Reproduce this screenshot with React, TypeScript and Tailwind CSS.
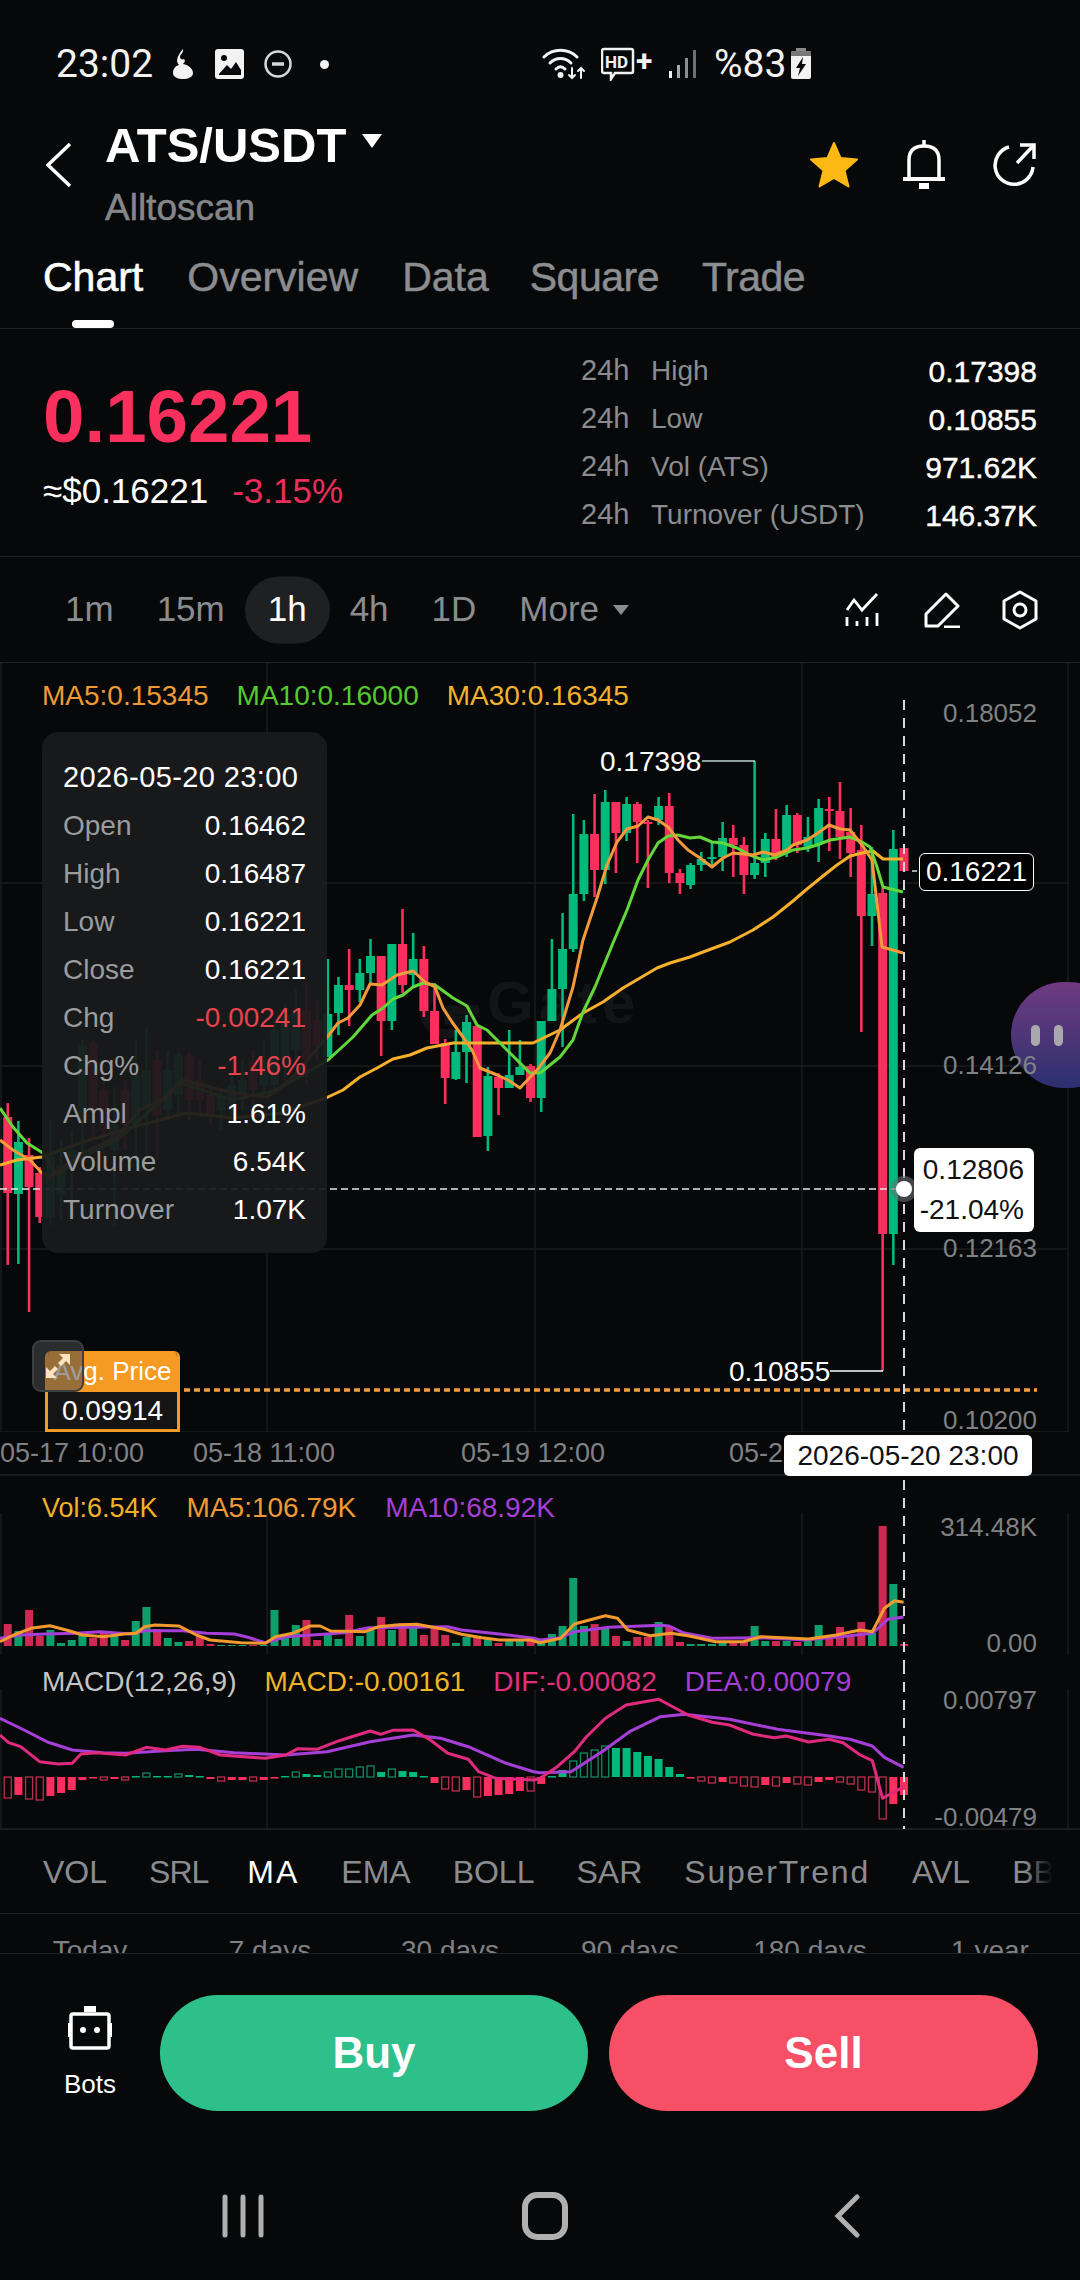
import { ReactNode } from 'react';

const UP = '#00b97a';
const DOWN = '#f92f5d';
const GRID = '#1a1c1e';
const LAST_X = 904;
const STEP = 10.67;

// [high, bodyTop, bodyBottom, low, up?] in page pixels, oldest first
const candles: [number, number, number, number, number][] = [
  [1103, 1117, 1193, 1265, 0], [1121, 1142, 1194, 1264, 1], [1138, 1155, 1187, 1312, 0], [1167, 1173, 1217, 1223, 0],
  [1120, 1157, 1217, 1225, 1], [1140, 1165, 1195, 1220, 1], [1130, 1150, 1168, 1200, 1], [1040, 1045, 1120, 1155, 1],
  [1040, 1043, 1110, 1140, 0], [1075, 1090, 1130, 1170, 0], [1087, 1125, 1150, 1226, 1], [1080, 1090, 1125, 1150, 0],
  [1040, 1075, 1125, 1160, 1], [1027, 1070, 1110, 1160, 1], [1050, 1060, 1115, 1160, 0], [1050, 1070, 1110, 1120, 1],
  [1052, 1055, 1095, 1115, 1], [1052, 1055, 1100, 1120, 0], [1060, 1080, 1100, 1115, 0], [1085, 1095, 1115, 1125, 0],
  [1090, 1095, 1110, 1130, 1], [1075, 1085, 1105, 1115, 1], [1060, 1080, 1095, 1110, 1], [1050, 1060, 1090, 1105, 0],
  [1040, 1060, 1085, 1095, 1], [1020, 1030, 1085, 1095, 1], [1005, 1015, 1060, 1080, 1], [990, 1010, 1050, 1065, 1],
  [983, 1010, 1060, 1085, 0], [1000, 1020, 1045, 1060, 0],
  [959, 1014, 1057, 1057, 1], [977, 985, 1013, 1035, 1], [949, 985, 990, 1026, 0], [959, 973, 990, 1002, 1],
  [939, 956, 973, 983, 1], [956, 956, 1021, 1056, 0], [944, 944, 1021, 1030, 1], [909, 944, 985, 993, 0],
  [933, 959, 975, 987, 1], [946, 959, 1011, 1017, 0], [983, 1011, 1044, 1044, 0], [1039, 1043, 1078, 1104, 0],
  [1030, 1052, 1079, 1080, 1], [1015, 1022, 1052, 1083, 1], [1026, 1026, 1137, 1137, 0], [1067, 1076, 1136, 1151, 1],
  [1073, 1077, 1088, 1115, 0], [1030, 1075, 1088, 1088, 1], [1040, 1067, 1075, 1075, 1], [1064, 1066, 1098, 1102, 0],
  [1021, 1021, 1098, 1112, 1], [939, 989, 1021, 1021, 1], [913, 949, 989, 1047, 1], [814, 894, 949, 952, 1],
  [820, 834, 894, 901, 1], [794, 834, 870, 897, 0], [790, 802, 870, 884, 1], [802, 802, 833, 873, 0],
  [797, 804, 833, 841, 1], [802, 804, 822, 863, 0], [820, 822, 823, 888, 0], [797, 806, 820, 825, 1],
  [793, 806, 873, 883, 0], [869, 873, 883, 894, 0], [863, 865, 885, 889, 1], [852, 859, 865, 871, 1],
  [843, 857, 859, 865, 1], [822, 838, 857, 871, 1], [825, 838, 845, 877, 0], [837, 845, 875, 894, 0],
  [761, 863, 875, 879, 1], [833, 839, 863, 877, 1], [809, 839, 857, 860, 0], [805, 815, 853, 857, 1],
  [813, 815, 845, 853, 0], [817, 837, 847, 852, 1], [799, 808, 844, 862, 1], [797, 809, 811, 851, 0],
  [782, 811, 837, 859, 0], [808, 832, 853, 877, 0], [825, 850, 916, 1032, 0], [847, 894, 916, 946, 1],
  [888, 893, 1234, 1371, 0], [830, 849, 1234, 1265, 1], [848, 848, 871, 871, 0],
];

// bar height in px, negative means an up bar
const volumes = [
  22, -15, 36, 10, -16, -3, -6, -13, 8, 13, -10, 6, -25, -39, 17, -8, -4, 5, 9, 2, -1, -1, -1, 1, -1, -36, -8, -21, 26, 6, -13, -7, 31, -10, -16,
  29, -16, 23, -21, 11, 18, 11, -3, -9, 8, -8, 3, -5, -5, 5, -3, -12, -20, -68, -20, 22, -19, 10, -5, 9, 9, -24, 19, 4, -2, -2, -2, -4, 5, 5,
  -20, -5, 5, -5, 4, -5, -21, 9, 19, 9, 24, -13, 120, -62, 2,
];

// positive is below the zero line; h = drawn hollow
const macd: [number, 'h'?][] = [
  [21, 'h'], [18], [22, 'h'], [23, 'h'], [19], [16], [13], [3], [1], [3, 'h'], [2], [3, 'h'], [-1], [-4, 'h'], [-1], [-1], [-3, 'h'], [-2], [-1], [2],
  [4, 'h'], [3], [3], [4, 'h'], [3], [1], [-1], [-5, 'h'], [-3], [-2], [-5, 'h'], [-8, 'h'], [-8, 'h'], [-10, 'h'], [-11, 'h'], [-5], [-8, 'h'], [-6], [-5], [-1],
  [6], [12, 'h'], [14, 'h'], [13], [20, 'h'], [19], [18], [17], [14], [14, 'h'], [7], [-1], [-7], [-16, 'h'], [-24, 'h'], [-27, 'h'], [-31, 'h'], [-29], [-29], [-25],
  [-21], [-18], [-10], [-3], [1], [4, 'h'], [6, 'h'], [5], [6, 'h'], [9, 'h'], [10, 'h'], [8], [9, 'h'], [6], [7, 'h'], [8, 'h'], [5], [3], [5, 'h'], [7, 'h'],
  [13, 'h'], [15, 'h'], [42, 'h'], [27], [18],
];

const barX = (i: number, total: number) => LAST_X - (total - 1 - i) * STEP;

// traced from the two halves of a panel, each given in crop units
const traced = (top: number, left: number[][], right: number[][]) =>
  [...left.map(([x, y]) => [x / 2.904, y]), ...right.map(([x, y]) => [540 + x / 2.904, y])]
    .map(([x, y]) => `${x.toFixed(1)},${(top + y / 3).toFixed(1)}`)
    .join(' ');

const vol5 = traced(1470,
  [[0, 515], [40, 495], [90, 475], [145, 467], [200, 482], [240, 495], [300, 500], [360, 492], [395, 490], [420, 470], [450, 465], [520, 468], [570, 495], [610, 510], [700, 518], [770, 520], [800, 500], [850, 490], [900, 468], [930, 468], [960, 483], [1010, 484], [1060, 485], [1100, 470], [1150, 465], [1210, 463], [1290, 478], [1340, 493], [1400, 503], [1450, 510], [1540, 510]],
  [[0, 518], [60, 505], [100, 462], [190, 437], [225, 445], [255, 480], [320, 497], [380, 490], [430, 497], [510, 515], [590, 515], [640, 500], [780, 507], [860, 495], [930, 480], [965, 485], [1000, 415], [1030, 392], [1056, 397]]);
const vol10 = traced(1470,
  [[0, 505], [60, 495], [130, 492], [220, 490], [290, 485], [380, 492], [420, 482], [530, 482], [600, 490], [680, 492], [720, 502], [770, 518], [830, 500], [950, 492], [1000, 488], [1070, 473], [1300, 470], [1340, 480], [1450, 492], [1550, 505]],
  [[0, 510], [60, 503], [100, 485], [200, 472], [350, 466], [375, 468], [415, 488], [500, 505], [640, 503], [770, 510], [900, 497], [965, 490], [1010, 448], [1056, 441]]);
const dif = traced(1470,
  [[0, 795], [25, 818], [60, 830], [115, 875], [170, 882], [210, 880], [235, 852], [280, 848], [365, 855], [425, 832], [480, 840], [530, 829], [580, 832], [640, 855], [770, 865], [830, 855], [865, 836], [920, 838], [985, 812], [1075, 783], [1105, 793], [1140, 781], [1200, 780], [1250, 810], [1300, 850], [1360, 868], [1390, 905], [1440, 925], [1550, 930]],
  [[0, 925], [50, 890], [100, 845], [135, 800], [190, 745], [250, 705], [345, 688], [430, 735], [500, 757], [550, 765], [620, 793], [680, 803], [715, 798], [780, 816], [840, 808], [880, 818], [930, 855], [965, 872], [995, 985], [1056, 950]]);
const dea = traced(1470,
  [[0, 745], [70, 780], [140, 817], [210, 840], [300, 848], [365, 850], [480, 842], [570, 838], [680, 848], [830, 855], [950, 845], [1075, 815], [1200, 795], [1280, 805], [1360, 830], [1470, 880], [1550, 905]],
  [[0, 908], [90, 905], [180, 845], [260, 785], [350, 740], [420, 733], [550, 748], [690, 778], [840, 798], [900, 808], [965, 828], [1000, 862], [1056, 892]]);

const ma5 = '0,1140 13,1150 30,1160 42,1173 50,1177 83,1153 117,1137 140,1110 167,1097 183,1080 233,1093 267,1097 293,1077 328,1036 338,1023 348,1018 360,1005 370,984 382,985 397,975 413,971 425,982 435,987 443,1008 452,1022 463,1037 472,1050 480,1068 497,1075 508,1080 520,1088 537,1070 550,1053 560,1030 573,987 583,940 597,898 607,865 617,842 627,829 638,826 648,817 658,820 668,827 678,840 688,850 700,858 712,867 723,858 733,853 743,854 753,855 763,852 775,855 787,850 793,845 807,840 818,833 829,825 840,829 850,830 862,845 872,860 877,903 882,947 903,953';
const ma10 = '0,1108 13,1127 27,1143 43,1153 57,1175 83,1157 117,1140 140,1120 180,1083 233,1100 277,1090 328,1060 353,1037 372,1015 383,1008 393,999 403,995 413,987 423,983 435,985 453,998 467,1006 477,1025 487,1030 500,1043 517,1060 530,1073 540,1073 560,1057 573,1040 583,1012 595,987 613,943 627,910 638,880 648,860 658,843 668,836 678,835 690,838 700,837 712,842 723,843 737,848 750,855 763,860 777,857 793,850 807,848 817,845 830,840 850,837 862,842 870,847 877,867 883,887 903,892';
const ma30 = '0,1165 17,1160 42,1157 83,1142 133,1127 187,1113 233,1118 283,1113 328,1097 343,1090 360,1077 377,1068 393,1059 410,1055 427,1048 453,1043 500,1043 533,1043 560,1030 583,1013 603,1002 623,988 640,978 657,968 670,963 690,957 703,952 730,942 753,930 773,917 793,901 807,889 823,876 837,865 850,856 862,853 873,851 883,859 903,859';

function Grid({ top, bottom, rows = [] }: { top: number; bottom: number; rows?: number[] }) {
  return (
    <g stroke={GRID} strokeWidth="1.5">
      {[1, 267, 535, 802, 1068].map((x) => <line key={x} x1={x} x2={x} y1={top} y2={bottom} />)}
      {rows.map((y) => <line key={y} x1="0" x2="1068" y1={y} y2={y} />)}
    </g>
  );
}

function Crosshair({ top, bottom }: { top: number; bottom: number }) {
  return <line x1={LAST_X} x2={LAST_X} y1={top} y2={bottom} stroke="#d8d8d8" strokeWidth="2" strokeDasharray="10 8" />;
}

function Line({ points, color, width = 3 }: { points: string; color: string; width?: number }) {
  return <polyline points={points} fill="none" stroke={color} strokeWidth={width} strokeLinejoin="round" />;
}

function AxisLabel({ className, children }: { className: string; children: ReactNode }) {
  return <div className={`absolute right-[43px] h-[30px] text-[26px] leading-[30px] text-[#7f8184] ${className}`}>{children}</div>;
}

function Row({ label, value, valueClass = 'text-white' }: { label: string; value: string; valueClass?: string }) {
  return (
    <div className="flex h-[48px] items-center justify-between text-[28px]">
      <span className="text-[#9b9c9e]">{label}</span>
      <span className={valueClass}>{value}</span>
    </div>
  );
}

function StatRow({ label, value }: { label: string; value: string }) {
  return (
    <div className="flex h-[48px] items-center text-[28px]">
      <span className="w-[70px] text-[29px] text-[#8a8c8f]">24h</span>
      <span className="text-[#8a8c8f]">{label}</span>
      <span className="ml-auto text-[30px] text-white [-webkit-text-stroke:0.4px_white]">{value}</span>
    </div>
  );
}

function MainPane() {
  return (
    <div className="relative h-[769px] w-[1080px] overflow-hidden">
      <div className="absolute left-[487px] top-[305px] text-[60px] font-bold leading-[70px] tracking-[5px] text-[#131416]">Gate</div>
      <svg className="absolute inset-0" width="1080" height="769" viewBox="0 663 1080 769">
        <Grid top={663} bottom={1432} rows={[883, 1066, 1249, 1432]} />
        <path d="M445 990 a22 22 0 1 0 22 30 h-18 v-10 h30" fill="none" stroke="#131416" strokeWidth="9" />
        {candles.map(([hi, top, bot, lo, up], i) => {
          const x = barX(i, candles.length);
          const fill = up ? UP : DOWN;
          return (
            <g key={i} fill={fill}>
              <rect x={x - 1.3} y={hi} width="2.6" height={lo - hi} />
              <rect x={x - 4.5} y={top} width="9" height={Math.max(bot - top, 2)} />
            </g>
          );
        })}
        <Line points={ma30} color="#f6b02c" />
        <Line points={ma10} color="#62d83a" />
        <Line points={ma5} color="#f39a3a" />
        <polyline points="702,761 755,761" fill="none" stroke="#bcd6cc" strokeWidth="1.5" />
        <polyline points="830,1371 883,1371" fill="none" stroke="#ffffff" strokeWidth="1.5" />
        <line x1="912" x2="917" y1="871" y2="871" stroke="#d8d8d8" strokeWidth="1.5" />
        <line x1="184" x2="1037" y1="1390" y2="1390" stroke="#f0a040" strokeWidth="3.5" strokeDasharray="6 4" />
        <line x1="0" x2={LAST_X} y1="1189" y2="1189" stroke="#e8e8e8" strokeWidth="1.5" strokeDasharray="7 4" />
        <Crosshair top={700} bottom={1432} />
        <circle cx={LAST_X} cy="1189" r="13" fill="#6b6d70" fillOpacity="0.6" />
        <circle cx={LAST_X} cy="1189" r="8" fill="#ffffff" />
      </svg>

      <div className="absolute left-[42px] top-[16px] flex h-[34px] items-center gap-[28px] text-[28px]">
        <span className="text-[#ef9a35]">MA5:0.15345</span>
        <span className="text-[#56c92e]">MA10:0.16000</span>
        <span className="text-[#f4b12e]">MA30:0.16345</span>
      </div>

      {/* floating assistant */}
      <div className="absolute left-[1011px] top-[319px] flex h-[106px] w-[110px] items-center rounded-full bg-gradient-to-b from-[#6f3a80] to-[#2b2f70] pl-[20px]">
        <span className="h-[21px] w-[9px] rounded-full bg-[#a9a9ad]" />
        <span className="ml-[14px] h-[21px] w-[9px] rounded-full bg-[#a9a9ad]" />
      </div>

      <AxisLabel className="top-[35px]">0.18052</AxisLabel>
      <AxisLabel className="top-[387px]">0.14126</AxisLabel>
      <AxisLabel className="top-[570px]">0.12163</AxisLabel>
      <AxisLabel className="top-[742px]">0.10200</AxisLabel>

      {/* tooltip */}
      <div className="absolute left-[42px] top-[69px] h-[521px] w-[285px] rounded-[16px] bg-[#1a1b1d]/[0.94] px-[21px] pt-[22px]">
        <div className="flex h-[48px] items-center whitespace-nowrap text-[29px] tracking-[0.4px] text-white">2026-05-20 23:00</div>
        <Row label="Open" value="0.16462" />
        <Row label="High" value="0.16487" />
        <Row label="Low" value="0.16221" />
        <Row label="Close" value="0.16221" />
        <Row label="Chg" value="-0.00241" valueClass="text-[#e5444c]" />
        <Row label="Chg%" value="-1.46%" valueClass="text-[#e5444c]" />
        <Row label="Ampl" value="1.61%" />
        <Row label="Volume" value="6.54K" />
        <Row label="Turnover" value="1.07K" />
      </div>

      <div className="absolute left-[600px] top-[83px] h-[32px] text-[28px] leading-[32px] text-white">0.17398</div>
      <div className="absolute left-[729px] top-[693px] h-[32px] text-[28px] leading-[32px] text-white">0.10855</div>

      <div className="absolute left-[919px] top-[190px] flex h-[38px] w-[115px] items-center justify-center rounded-[6px] border border-white bg-black text-[28px] text-white">0.16221</div>
      <div className="absolute left-[914px] top-[485px] flex h-[84px] w-[120px] flex-col items-end justify-center gap-[8px] rounded-[6px] bg-white pr-[10px] text-[28px] leading-[32px] text-[#111]">
        <span>0.12806</span>
        <span>-21.04%</span>
      </div>

      {/* avg price */}
      <div className="absolute left-[45px] top-[688px] h-[81px] w-[135px] overflow-hidden rounded-t-[6px] border-x-[3px] border-b-[3px] border-[#f59a23]">
        <div className="flex h-[41px] items-center justify-center whitespace-nowrap bg-[#f59a23] text-[26px] text-white">Avg. Price</div>
        <div className="flex h-[37px] items-center justify-center rounded-b-[5px] bg-[#151515] text-[28px] text-white">0.09914</div>
      </div>
      <div className="absolute left-[32px] top-[677px] flex h-[52px] w-[52px] items-center justify-center rounded-[9px] border-2 border-[#3c3e40] bg-[#4a4a4a]/55">
        <svg width="26" height="26" viewBox="0 0 26 26" fill="#fbe3c0">
          <path d="M14 1 H25 V12 L21 8 L16 13 L13 10 L18 5 Z" />
          <path d="M12 25 H1 V14 L5 18 L10 13 L13 16 L8 21 Z" />
        </svg>
      </div>
    </div>
  );
}

function TimeAxis() {
  return (
    <div className="relative flex h-[44px] w-[1080px] items-center border-b-2 border-[#1a1c1e] text-[27px] text-[#7f8184]">
      <span className="w-[193px]">05-17 10:00</span>
      <span className="w-[268px]">05-18 11:00</span>
      <span className="w-[268px]">05-19 12:00</span>
      <span>05-2</span>
      <div className="absolute left-[784px] top-[3px] flex h-[41px] w-[248px] items-center justify-center rounded-[5px] bg-white text-[28px] text-[#111]">2026-05-20 23:00</div>
    </div>
  );
}

function VolumePane() {
  return (
    <div className="relative h-[188px] w-[1080px]">
      <svg className="absolute inset-0" width="1080" height="188" viewBox="0 1476 1080 188">
        <Grid top={1513} bottom={1655} />
        {volumes.map((v, i) => (
          <rect key={i} x={barX(i, volumes.length) - 4} y={1646 - Math.abs(v)} width="8" height={Math.abs(v)} fill={v > 0 ? '#cc2a52' : '#0e9e6b'} />
        ))}
        <Line points={vol10} color="#a63fd8" />
        <Line points={vol5} color="#f39a2e" />
        <Crosshair top={1480} bottom={1664} />
      </svg>
      <div className="absolute left-[42px] top-[15px] flex h-[34px] items-center gap-[29px] text-[28px]">
        <span className="text-[27px] text-[#f2b029]">Vol:6.54K</span>
        <span className="text-[#ef9a35]">MA5:106.79K</span>
        <span className="text-[#a63fd8]">MA10:68.92K</span>
      </div>
      <AxisLabel className="top-[36px]">314.48K</AxisLabel>
      <AxisLabel className="top-[152px]">0.00</AxisLabel>
    </div>
  );
}

function MacdPane() {
  return (
    <div className="relative h-[166px] w-[1080px] border-b-2 border-[#1a1c1e]">
      <svg className="absolute inset-0" width="1080" height="166" viewBox="0 1664 1080 166">
        <Grid top={1689} bottom={1829} />
        {macd.map(([v, hollow], i) => {
          const x = barX(i, macd.length);
          const color = v > 0 ? DOWN : UP;
          const y = v > 0 ? 1777 : 1777 + v;
          const h = Math.abs(v);
          return hollow ? (
            <rect key={i} x={x - 3.5} y={y} width="7" height={h} fill="none" stroke={v > 0 ? '#b8304f' : '#0e8a60'} strokeWidth="1.3" />
          ) : (
            <rect key={i} x={x - 4} y={y} width="8" height={Math.max(h, 1.5)} fill={color} />
          );
        })}
        <Line points={dea} color="#a63fd8" />
        <Line points={dif} color="#e02a7e" />
        <Crosshair top={1664} bottom={1829} />
      </svg>
      <div className="absolute left-[42px] top-[1px] flex h-[34px] items-center gap-[28px] text-[28px]">
        <span className="text-[#c3c4c6]">MACD(12,26,9)</span>
        <span className="text-[#f0b428]">MACD:-0.00161</span>
        <span className="text-[#e0307f]">DIF:-0.00082</span>
        <span className="text-[#a53ed8]">DEA:0.00079</span>
      </div>
      <AxisLabel className="top-[21px]">0.00797</AxisLabel>
      <AxisLabel className="top-[138px]">-0.00479</AxisLabel>
    </div>
  );
}

export default function App() {
  return (
    <div className="flex h-[2280px] w-[1080px] flex-col overflow-hidden bg-[#060809] font-['Liberation_Sans',Arial,sans-serif] text-white">
      {/* status bar */}
      <div className="flex h-[100px] items-center pl-[56px] pt-[28px] font-['Roboto',sans-serif] text-[39px] text-[#f2f2f2]">
        <span className="w-[114px]">23:02</span>
        <svg width="26" height="30" viewBox="0 0 26 30" fill="#f2f2f2">
          <path d="M13 0 c1 4 -3 5 -3 8 c0 2 3 3 4 2 c2 2 0 4 -1 5 c6 1 10 5 10 9 c0 4 -5 6 -10 6 c-5 0 -10 -2 -10 -6 c0 -4 2 -7 6 -8 c-3 -3 -3 -8 4 -16z" />
        </svg>
        <svg className="ml-[19px]" width="30" height="30" viewBox="0 0 30 30">
          <rect width="29" height="30" rx="3" fill="#f2f2f2" />
          <path d="M4 25 L12 16 L16 20 L21 13 L26 21 V26 H4Z" fill="#060809" />
          <circle cx="9" cy="9" r="3" fill="#060809" />
        </svg>
        <svg className="ml-[18px]" width="30" height="30" viewBox="0 0 30 30" fill="none" stroke="#d8d8d8" strokeWidth="2.5">
          <circle cx="15" cy="15" r="12.5" />
          <line x1="9" x2="21" y1="15" y2="15" strokeWidth="3.5" />
        </svg>
        <span className="ml-[27px] h-[9px] w-[9px] rounded-full bg-[#f2f2f2]" />
        <svg className="ml-[213px]" width="44" height="32" viewBox="0 0 44 32" fill="none" stroke="#f2f2f2" strokeWidth="3" strokeLinecap="round">
          <path d="M2 9 C11 0 26 0 35 9" />
          <path d="M8 15 C14 9 23 9 29 15" />
          <path d="M14 21 C17 18 20 18 23 21" />
          <path d="M30 20 V30 M27 27 L30 30 L33 27" strokeWidth="2" />
          <path d="M39 30 V20 M36 23 L39 20 L42 23" strokeWidth="2" />
          <circle cx="18.5" cy="27" r="1.5" fill="#f2f2f2" />
        </svg>
        <svg className="ml-[15px]" width="58" height="34" viewBox="0 0 58 34">
          <path d="M3 2 H30 a2 2 0 0 1 2 2 V24 a2 2 0 0 1 -2 2 H14 L10 32 V26 H3 a2 2 0 0 1 -2 -2 V4 a2 2 0 0 1 2 -2z" fill="none" stroke="#f2f2f2" strokeWidth="2.5" />
          <text x="4" y="21" fontSize="17" fontWeight="700" fill="#f2f2f2" fontFamily="Roboto, sans-serif">HD</text>
          <text x="35" y="24" fontSize="30" fontWeight="700" fill="#f2f2f2" fontFamily="Roboto, sans-serif">+</text>
        </svg>
        <svg className="ml-[9px]" width="30" height="30" viewBox="0 0 30 30">
          <rect x="1" y="22" width="3" height="7" fill="#f2f2f2" />
          <rect x="9" y="16" width="3" height="13" fill="#a8a8a8" />
          <rect x="17" y="9" width="3" height="20" fill="#8d8d8d" />
          <rect x="25" y="1" width="3" height="28" fill="#6f6f6f" />
        </svg>
        <span className="ml-[16px] w-[76px]">%83</span>
        <svg width="22" height="32" viewBox="0 0 22 32">
          <rect x="6" y="0" width="10" height="4" fill="#8a8a8a" />
          <path d="M2 3 H20 a1 1 0 0 1 1 1 V8 H1 V4 a1 1 0 0 1 1 -1z" fill="#777" />
          <path d="M1 8 H21 V29 a2 2 0 0 1 -2 2 H3 a2 2 0 0 1 -2 -2z" fill="#f2f2f2" />
          <path d="M13 9 L6 20 H10 L8 28 L16 16 H12 Z" fill="#060809" />
        </svg>
      </div>

      {/* title */}
      <div className="flex h-[130px] items-center pl-[46px] pr-[43px]">
        <svg width="26" height="44" viewBox="0 0 26 44" fill="none" stroke="#fff" strokeWidth="3.5">
          <path d="M24 1 L2 22 L24 43" />
        </svg>
        <div className="ml-[33px] flex flex-col self-start pt-[20px]">
          <div className="flex items-center">
            <span className="text-[49px] font-bold leading-[50px]">ATS/USDT</span>
            <span className="ml-[16px] mb-[8px] h-0 w-0 border-x-[10px] border-t-[14px] border-x-transparent border-t-white" />
          </div>
          <span className="mt-[18px] text-[37px] leading-[40px] text-[#85878a] [-webkit-text-stroke:0.5px_#85878a]">Alltoscan</span>
        </div>
        <svg className="ml-auto" width="50" height="48" viewBox="0 0 50 48">
          <path d="M25 2 L31.5 17 L48 18.5 L35.5 29.5 L39.5 45.5 L25 37 L10.5 45.5 L14.5 29.5 L2 18.5 L18.5 17 Z" fill="#fdb913" stroke="#fdb913" strokeWidth="2" strokeLinejoin="round" />
        </svg>
        <svg className="ml-[43px]" width="44" height="50" viewBox="0 0 44 50" fill="none" stroke="#fff" strokeWidth="3.5">
          <path d="M7 38 V20 C7 10 13 6 22 6 C31 6 37 10 37 20 V38" />
          <path d="M1 39 H43" strokeWidth="4" />
          <path d="M22 0 V6" />
          <rect x="17" y="43" width="10" height="6" fill="#fff" stroke="none" />
        </svg>
        <svg className="ml-[45px]" width="46" height="46" viewBox="0 0 46 46" fill="none" stroke="#fff" strokeWidth="3.5">
          <path d="M18 5 A19 19 0 1 0 42 25" />
          <path d="M26 21 L43 3" />
          <path d="M29 3 H43 V17" />
        </svg>
      </div>

      {/* tabs */}
      <div className="relative flex h-[99px] gap-[44px] border-b border-[#1f2123] pl-[43px] pt-[23px] text-[41px] leading-[48px] text-[#8b8d90] [-webkit-text-stroke:0.5px_#8b8d90]">
        <span className="text-white [-webkit-text-stroke:0.6px_white]">Chart</span>
        <span>Overview</span>
        <span>Data</span>
        <span className="-ml-[3px] tracking-[-0.5px]">Square</span>
        <span className="-ml-[1px] tracking-[-0.5px]">Trade</span>
        <span className="absolute bottom-0 left-[72px] h-[8px] w-[42px] rounded-full bg-white" />
      </div>

      {/* price + 24h stats */}
      <div className="flex h-[228px] justify-between border-b border-[#1f2123] px-[43px]">
        <div className="pt-[51px]">
          <div className="text-[74.5px] font-bold leading-[74px] text-[#f92f5d]">0.16221</div>
          <div className="mt-[17px] flex h-[40px] items-center gap-[24px] text-[35px]">
            <span className="text-white">≈$0.16221</span>
            <span className="text-[#ea2e5b]">-3.15%</span>
          </div>
        </div>
        <div className="w-[456px] pt-[18px]">
          <StatRow label="High" value="0.17398" />
          <StatRow label="Low" value="0.10855" />
          <StatRow label="Vol (ATS)" value="971.62K" />
          <StatRow label="Turnover (USDT)" value="146.37K" />
        </div>
      </div>

      {/* intervals */}
      <div className="flex h-[105px] items-center gap-[43px] pl-[65px] pr-[42px] text-[35px] text-[#8a8c8f]">
        <span>1m</span>
        <span>15m</span>
        <span className="relative text-white">
          <span className="absolute -left-[23px] -right-[23px] top-1/2 h-[67px] -translate-y-1/2 rounded-full bg-[#1e2022]" />
          <span className="relative">1h</span>
        </span>
        <span>4h</span>
        <span>1D</span>
        <span className="flex items-center gap-[14px]">
          More
          <span className="h-0 w-0 border-x-[8px] border-t-[10px] border-x-transparent border-t-[#8a8c8f]" />
        </span>
        <svg className="ml-auto" width="34" height="34" viewBox="0 0 34 34" fill="none" stroke="#fff" strokeWidth="2.8">
          <path d="M2 17 L9 7 L17 17 L32 1" />
          <path d="M2 24 V33 M12 28 V33 M22 24 V33 M32 20 V33" />
        </svg>
        <svg className="ml-[2px]" width="36" height="36" viewBox="0 0 36 36" fill="none" stroke="#fff" strokeWidth="3">
          <path d="M2 34 V22 L22 2 L34 14 L14 34 Z" strokeLinejoin="round" />
          <path d="M20 35 H36" />
        </svg>
        <svg className="-ml-[1px]" width="36" height="40" viewBox="0 0 36 40" fill="none" stroke="#fff" strokeWidth="3">
          <path d="M18 2 L34 11 V29 L18 38 L2 29 V11 Z" strokeLinejoin="round" />
          <circle cx="18" cy="20" r="6" />
        </svg>
      </div>

      <div className="border-t border-[#1f2123]">
        <MainPane />
        <TimeAxis />
        <VolumePane />
        <MacdPane />
      </div>

      {/* indicators */}
      <div className="relative flex h-[84px] items-center gap-[42px] overflow-hidden border-b border-[#1f2123] pl-[43px] text-[32px] text-[#8a8c8f]">
        <span>VOL</span>
        <span className="tracking-[-1px]">SRL</span>
        <span className="-ml-[3px] tracking-[2px] text-white">MA</span>
        <span>EMA</span>
        <span>BOLL</span>
        <span>SAR</span>
        <span className="tracking-[1.8px]">SuperTrend</span>
        <span>AVL</span>
        <span>BB</span>
        <span className="absolute left-[1025px] top-0 h-full w-[55px] bg-gradient-to-r from-transparent via-[#060809] to-[#060809]" />
      </div>

      {/* return periods, cut off by the trade bar */}
      <div className="grid h-[40px] grid-cols-6 overflow-hidden border-b border-[#1f2123] pt-[23px] text-center text-[28px] leading-[28px] text-[#7f8184]">
        <span>Today</span>
        <span>7 days</span>
        <span>30 days</span>
        <span>90 days</span>
        <span>180 days</span>
        <span>1 year</span>
      </div>

      {/* trade bar */}
      <div className="flex h-[157px] items-start pt-[41px]">
        <div className="flex w-[160px] flex-col items-center pl-[20px] pt-[11px]">
          <svg width="44" height="44" viewBox="0 0 44 44" fill="none" stroke="#fff" strokeWidth="3.5">
            <rect x="16" y="0" width="12" height="6" fill="#fff" stroke="none" />
            <rect x="3" y="8" width="38" height="34" rx="2" />
            <path d="M1 17 V31 M43 17 V31" />
            <circle cx="15" cy="24" r="3" fill="#fff" stroke="none" />
            <circle cx="29" cy="24" r="3" fill="#fff" stroke="none" />
          </svg>
          <span className="mt-[19px] text-[26px] leading-[30px]">Bots</span>
        </div>
        <div className="flex h-[116px] w-[428px] items-center justify-center rounded-full bg-[#2dc08a] text-[44px] font-bold">Buy</div>
        <div className="ml-[21px] flex h-[116px] w-[429px] items-center justify-center rounded-full bg-[#f74f66] text-[44px] font-bold">Sell</div>
      </div>

      {/* navigation */}
      <div className="mt-[81px] flex items-center pl-[222px]">
        <svg width="42" height="44" viewBox="0 0 42 44" stroke="#b0b0b0" strokeWidth="5" strokeLinecap="round">
          <path d="M3 3 V41 M21 3 V41 M39 3 V41" />
        </svg>
        <svg className="ml-[258px]" width="46" height="48" viewBox="0 0 46 48" fill="none" stroke="#b0b0b0" strokeWidth="6">
          <rect x="3" y="3" width="40" height="42" rx="12" />
        </svg>
        <svg className="ml-[266px]" width="26" height="44" viewBox="0 0 26 44" fill="none" stroke="#b0b0b0" strokeWidth="5" strokeLinecap="round">
          <path d="M23 3 L4 22 L23 41" />
        </svg>
      </div>
    </div>
  );
}
